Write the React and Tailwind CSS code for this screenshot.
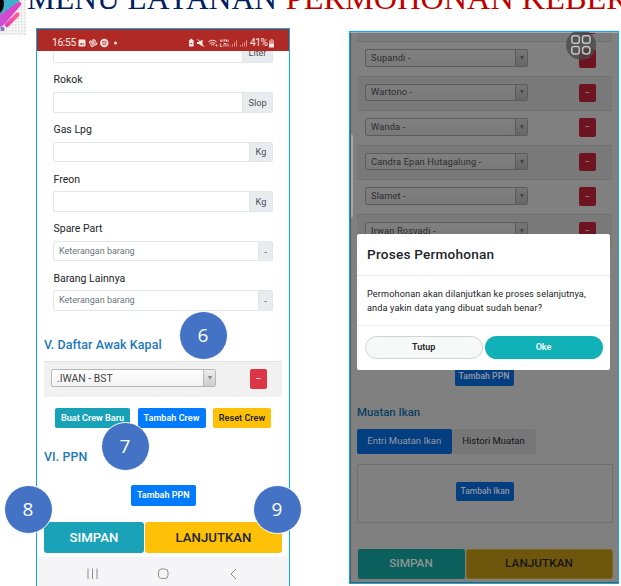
const fields = [
  { label: "Rokok", unit: "Slop", unitClass: "w-[30px]" },
  { label: "Gas Lpg", unit: "Kg", unitClass: "w-[23px]" },
  { label: "Freon", unit: "Kg", unitClass: "w-[23px]" },
  { label: "Spare Part", unit: "-", unitClass: "w-[14px]", hint: "Keterangan barang" },
  { label: "Barang Lainnya", unit: "-", unitClass: "w-[14px]", hint: "Keterangan barang" },
];

const crew = ["Supandi -", "Wartono -", "Wanda -", "Candra Epan Hutagalung -", "Slamet -", "Irwan Rosyadi -"];

function Logo() {
  return (
    <svg className="absolute left-0 top-0" width="27" height="36" viewBox="0 0 27 36">
      <defs>
        <pattern id="weave" width="3" height="3" patternUnits="userSpaceOnUse">
          <rect width="3" height="3" fill="#f6f6f6" />
          <rect width="1.4" height="1.4" fill="#d9d9d9" />
        </pattern>
        <linearGradient id="pink" x1="0" y1="1" x2="1" y2="0">
          <stop offset="0" stopColor="#e83fb0" />
          <stop offset="1" stopColor="#ff6098" />
        </linearGradient>
        <linearGradient id="violet" x1="0" y1="1" x2="1" y2="0">
          <stop offset="0" stopColor="#c850d8" />
          <stop offset="1" stopColor="#e43fc0" />
        </linearGradient>
      </defs>
      <rect width="26" height="35.5" fill="url(#weave)" />
      <path d="M2 0H20L0 22V12Z" fill="#3fb0cc" />
      <path d="M0 0H3.500C4.500 5 3.500 10 0 13Z" fill="#000" />
      <path d="M0 15L19 1.500Q22 2.500 21 5L4 25L0 27.500Z" fill="url(#violet)" />
      <path d="M7 25L17.500 14.500" stroke="url(#pink)" strokeWidth="4.200" strokeLinecap="round" />
      <circle cx="2.500" cy="29" r="2.200" fill="#8878c0" />
    </svg>
  );
}

function StatusBar() {
  return (
    <div className="flex h-[22px] shrink-0 items-center bg-[#b02a25] pl-[15px] pr-[15px] pt-[6px] text-[10.200px] leading-none text-[#fbe9e7]">
      <span className="w-[26px] shrink-0 whitespace-nowrap tracking-[-0.300px]">16:55</span>
      <svg className="shrink-0" width="40" height="10" viewBox="0 0 40 10" fill="none">
        <rect x="0.500" y="1.500" width="7" height="7" rx="1.200" fill="#fbe9e7" />
        <path d="M1.500 6.500L3.200 4.800L4.500 6L5.500 5.200L6.700 6.500Z" fill="#b02a25" />
        <path d="M15 5V1.800C17 1.500 17.500 3 17 4M15 5H11.500C11 3.200 13 2.800 14 3.500M15 5V8.500C13 8.800 12.500 7 13 6M15 5H18.800C19.200 7 17 7.300 16 6.500" stroke="#fbe9e7" strokeWidth="1.100" />
        <circle cx="26.300" cy="5" r="4.200" fill="#fbe9e7" />
        <path d="M24 3.600Q26.500 2.800 29 4M24.200 5.200Q26.500 4.600 28.500 5.600M24.500 6.700Q26.500 6.300 28 7" stroke="#b02a25" strokeWidth="0.800" />
        <circle cx="37.500" cy="5" r="1.500" fill="#fbe9e7" />
      </svg>
      <svg className="ml-auto shrink-0" width="60" height="10" viewBox="0 0 60 10" fill="none" stroke="#fbe9e7">
        <rect x="1" y="2" width="4.600" height="6.500" rx="0.600" fill="#fbe9e7" stroke="none" />
        <rect x="2.300" y="0.800" width="2" height="1.500" fill="#fbe9e7" stroke="none" />
        <path d="M2.500 5.500H4.200" stroke="#b02a25" />
        <path d="M9 4H11L14.500 1.500V8.500L11 6H9Z" fill="#fbe9e7" stroke="none" />
        <path d="M9.500 1.200L16 8.600" />
        <path d="M20.500 3.800Q24.500 0.600 28.500 3.800M21.800 5.500Q24.500 3.300 27.200 5.500M23.200 7Q24.500 6 26 7" />
        <circle cx="28.500" cy="7.500" r="0.900" fill="#fbe9e7" stroke="none" />
        <path d="M32 1.500L33.200 4L34.500 1.500M36 4V1.500M36 2H38.500V4M40 1.500V4M32.300 5.500V8.500H34.500M36 8.500V5.500H38V8.500M40 5.500V8.500" strokeWidth="0.800" />
        <path d="M42.500 8.500V7.500M44.500 8.500V6.200M46.500 8.500V4.500M48.500 8.500V2.300M52.500 8.500V7M54.500 8.500V5.500M56.500 8.500V4M58.500 8.500V2.200" strokeWidth="0.900" opacity="0.600" />
      </svg>
      <span className="ml-[2px] w-[18px] shrink-0 whitespace-nowrap tracking-[-0.500px]">41%</span>
      <svg className="ml-[1px] shrink-0" width="5" height="9" viewBox="0 0 5 9">
        <rect x="1.200" width="2.600" height="1.500" fill="#d98f8b" />
        <rect y="1.200" width="5" height="3.500" fill="#d98f8b" />
        <rect y="4.500" width="5" height="4" fill="#fbe9e7" />
      </svg>
    </div>
  );
}

function Field({ label, unit, unitClass, hint }) {
  return (
    <div className="mb-[9.200px] h-[40.400px] shrink-0">
      <div className="h-5 pl-[0.500px] pt-[2.400px] text-[10.500px] leading-[12px] text-[#212529]">{label}</div>
      <div className="flex h-[20.500px] overflow-hidden rounded-[2px] border border-[#e3e6e9] text-[9.200px]">
        <div className="flex flex-1 items-center pl-[5px] pt-px text-[9px] text-[#6c757d]">{hint}</div>
        <div className={"flex items-center justify-center border-l border-[#e0e4e8] bg-[#e9ecef] pt-px text-[#495057] " + unitClass}>{unit}</div>
      </div>
    </div>
  );
}

function Circle({ n, place }) {
  return (
    <div className={"absolute flex size-[49px] items-center justify-center rounded-full border border-white bg-[#4472c4] font-['Open_Sans','Noto_Sans',sans-serif] text-[19px] leading-none text-white " + place}>
      {n}
    </div>
  );
}

function LeftPhone() {
  return (
    <div className="flex h-[560px] w-[254px] shrink-0 flex-col border border-b-0 border-[#00aeef] bg-white">
      <StatusBar />
      <div className="ml-4 flex h-[12px] w-[220px] shrink-0 overflow-hidden rounded-b-[2px] border border-t-0 border-[#e3e6e9] text-[9px] leading-none text-[#495057]">
        <div className="flex-1" />
        <div className="w-[30px] border-l border-[#e0e4e8] bg-[#e9ecef] text-center"><div className="-mt-[2.500px]">Liter</div></div>
      </div>
      <div className="ml-4 mt-[9px] flex w-[220px] shrink-0 flex-col">
        {fields.map((f) => <Field key={f.label} {...f} />)}
      </div>
      <div className="ml-[7px] mt-[16px] h-[17px] shrink-0 text-[12.400px] font-medium leading-[17px] tracking-[0.120px] text-[#1b78bb]">V. Daftar Awak Kapal</div>
      <div className="ml-[7px] mt-[8.500px] flex h-9 w-[238px] shrink-0 border-t border-[#e4e4e4] bg-[#f1f1f1] pl-[7px] pt-[7px]">
        <div className="flex h-[18px] w-[165px] overflow-hidden rounded-[2px] border border-[#b8b8b8] bg-gradient-to-b from-white to-[#f3f3f3]">
          <div className="flex flex-1 items-center pl-[5px] pt-px text-[10.400px] text-[#444]">.IWAN - BST</div>
          <div className="flex w-[12px] items-center justify-center border-l border-[#b8b8b8] bg-gradient-to-b from-[#eee] to-[#ccc]">
            <svg width="4" height="4"><path d="M0 0H4L2 4Z" fill="#888" /></svg>
          </div>
        </div>
        <div className="ml-[34px] flex h-5 w-[17px] items-center justify-center rounded-[2px] bg-[#dc3545] text-[9px] text-white">–</div>
      </div>
      <div className="ml-[18px] mt-[10.500px] flex h-[20.500px] shrink-0 gap-[7.500px] text-[9.100px] font-semibold text-white">
        <div className="flex w-[75px] items-center justify-center whitespace-nowrap rounded-[2px] bg-[#17a2b8] pt-px">Buat Crew Baru</div>
        <div className="flex w-[68px] items-center justify-center whitespace-nowrap rounded-[2px] bg-[#007bff] pt-px">Tambah Crew</div>
        <div className="flex w-[58px] items-center justify-center whitespace-nowrap rounded-[2px] bg-[#ffc107] pt-px text-[#212529]">Reset Crew</div>
      </div>
      <div className="ml-[7px] mt-[21px] h-4 shrink-0 text-[12.400px] font-medium leading-4 tracking-[0.100px] text-[#1b78bb]">VI. PPN</div>
      <div className="ml-[93.500px] mt-[20px] flex h-[20.500px] w-[65.500px] shrink-0 items-center justify-center rounded-[2px] bg-[#007bff] pt-px text-[9px] font-semibold text-white">Tambah PPN</div>
      <div className="ml-[7px] mt-[16px] flex h-[31.500px] shrink-0 gap-[1px] text-[13.200px] font-medium">
        <div className="flex w-[100px] items-center justify-center rounded-[3px] bg-[#1aa2b8] pt-px text-white">SIMPAN</div>
        <div className="flex w-[137px] items-center justify-center rounded-[3px] bg-[#ffc107] pt-px text-[#212529]">LANJUTKAN</div>
      </div>
      <div className="mt-[3.500px] flex h-[34px] shrink-0 bg-[#f5f5f7] pl-[50px] pt-[11px]">
        <svg width="152" height="12" viewBox="0 0 152 12" fill="none" stroke="#8c8c8e" strokeWidth="1">
          <path d="M1 0.500V11M5.500 0.500V11M10 0.500V11" />
          <rect x="71.500" y="1" width="9.500" height="9.500" rx="3.200" />
          <path d="M149 1L144 6L149 11" />
        </svg>
      </div>
    </div>
  );
}

function CrewRow({ name, dark }) {
  return (
    <div className={"flex h-[34.600px] shrink-0 border-t border-[#717171] pl-2 pt-[7px] " + (dark ? "bg-[#797979]" : "")}>
      <div className="flex h-[17.500px] w-[163px] overflow-hidden rounded-[2px] border border-[#5c5c5c] bg-gradient-to-b from-[#808080] to-[#797979]">
        <div className="flex flex-1 items-center pl-[5px] text-[9.300px] tracking-[0.120px] text-[#2d2d2d]">{name}</div>
        <div className="flex w-[12px] items-center justify-center border-l border-[#5c5c5c] bg-gradient-to-b from-[#777] to-[#666]">
          <svg width="4" height="4"><path d="M0 0H4L2 4Z" fill="#444" /></svg>
        </div>
      </div>
      <div className="ml-[51px] flex h-[18.500px] w-[16.500px] items-center justify-center rounded-[2px] bg-[#6e1320] text-[8px] text-[#b0a0a0]">–</div>
    </div>
  );
}

function RightPhone() {
  return (
    <div className="relative mt-[3px] flex h-[553px] w-[270px] shrink-0 flex-col overflow-hidden border border-[#00aeef] bg-[#808080] pl-[7px]">
      <div className="flex h-[9px] w-[255px] shrink-0 bg-[#797979]">
        <div className="ml-[222px] h-[2px] w-[16px] bg-[#6e1320]" />
      </div>
      <div className="w-[255px]">
        {crew.map((name, i) => <CrewRow key={name} name={name} dark={i % 2 === 1} />)}
      </div>
      <div className="ml-[97.500px] mt-[118px] flex h-[19px] w-[59px] shrink-0 items-center justify-center whitespace-nowrap rounded-[2px] bg-[#033e80] text-[8.700px] font-semibold text-[#8d95a0]">Tambah PPN</div>
      <div className="mt-[18px] h-4 text-[11.400px] font-medium leading-4 text-[#0b4162]">Muatan Ikan</div>
      <div className="mt-[9.500px] flex h-[24.500px] shrink-0 text-[9.500px] text-[#151515]">
        <div className="flex w-[94.500px] items-center justify-center rounded-[2px] bg-[#033e80] text-[#929aa5]">Entri Muatan Ikan</div>
        <div className="flex w-[84px] items-center justify-center rounded-[2px] bg-[#777]">Histori Muatan</div>
      </div>
      <div className="mt-[10.500px] flex h-[59px] w-[256px] shrink-0 items-start justify-center border border-[#6f6f6f] pt-[17px]">
        <div className="flex h-[18.500px] w-[58.500px] items-center justify-center whitespace-nowrap rounded-[2px] bg-[#033e80] text-[8.500px] font-medium text-[#8d95a0]">Tambah Ikan</div>
      </div>
      <div className="ml-[0.500px] mt-[25.500px] flex h-[30px] shrink-0 gap-[1px] text-[11.800px] font-medium">
        <div className="flex w-[107px] items-center justify-center rounded-[2px] bg-[#0b5f5d] pt-px text-[#8b9695]">SIMPAN</div>
        <div className="flex w-[147px] items-center justify-center rounded-[3px] border border-[#806713] bg-[#6e560c] pt-px text-[#151515]">LANJUTKAN</div>
      </div>

      <div className="absolute left-0 top-[102px] h-[84px] w-[3px] rounded-r bg-[#a8a8a8]" />
      <div className="absolute inset-y-0 left-0 w-px bg-[#555]" />
      <div className="absolute inset-x-0 bottom-0 h-px bg-[#555]" />
      <div className="absolute inset-x-0 top-0 h-px bg-[#aaa]" />
      <div className="absolute left-[216px] top-[-2px] flex size-[30px] items-center justify-center rounded-full bg-[#4a4a4a]/80">
        <svg width="22" height="22" viewBox="0 0 22 22" fill="none" stroke="#c2c2c2" strokeWidth="1.500">
          <rect x="1.800" y="1.800" width="7.500" height="7.500" rx="2.200" />
          <rect x="12.500" y="1.800" width="7.500" height="7.500" rx="2.200" />
          <rect x="1.800" y="12.500" width="7.500" height="7.500" rx="2.200" />
          <rect x="12.500" y="12.500" width="7.500" height="7.500" rx="3.200" />
        </svg>
      </div>

      <div className="absolute left-[7px] top-[202px] h-[136px] w-[253px] rounded-[2px] bg-white text-[#212529]">
        <div className="flex h-[42px] items-center border-b border-[#e6e8ea] pl-[10px] text-[13.600px] font-medium tracking-[0.220px]">Proses Permohonan</div>
        <div className="h-[50px] border-b border-[#eceef0] pl-[10px] pt-[11px] text-[9.200px] leading-[14px] tracking-[0.100px]">
          <div className="whitespace-nowrap">Permohonan akan dilanjutkan ke proses selanjutnya,</div>
          <div className="whitespace-nowrap">anda yakin data yang dibuat sudah benar?</div>
        </div>
        <div className="flex h-[33px] gap-[2px] pl-2 pt-[10px] text-[9px] font-semibold">
          <div className="flex w-[117.500px] items-center justify-center rounded-full border border-[#d0d3d4] bg-[#f7f9f9] pt-px">Tutup</div>
          <div className="flex w-[118px] items-center justify-center rounded-full bg-[#10b2b7] pt-px text-white">Oke</div>
        </div>
      </div>
    </div>
  );
}

export default function App() {
  return (
    <div className="relative h-[586px] w-[621px] overflow-hidden bg-white font-['Roboto',sans-serif]">
      <div className="flex h-[28px] items-start overflow-hidden whitespace-pre pl-[27px]">
        <div className="-mt-[20px] font-['Liberation_Serif',serif] text-[31.500px] leading-[36px] text-[#002060]">
          MENU LAYANAN <span className="ml-px text-[32.300px] text-[#c00000]">PERMOHONAN KEBERANGKATAN</span>
        </div>
      </div>
      <Logo />
      <div className="flex gap-[59px] pl-9">
        <LeftPhone />
        <RightPhone />
      </div>
      <Circle n="6" place="left-[178.500px] top-[311px]" />
      <Circle n="7" place="left-[100.500px] top-[422px]" />
      <Circle n="8" place="left-[3.500px] top-[485px]" />
      <Circle n="9" place="left-[252.500px] top-[485px]" />
    </div>
  );
}
